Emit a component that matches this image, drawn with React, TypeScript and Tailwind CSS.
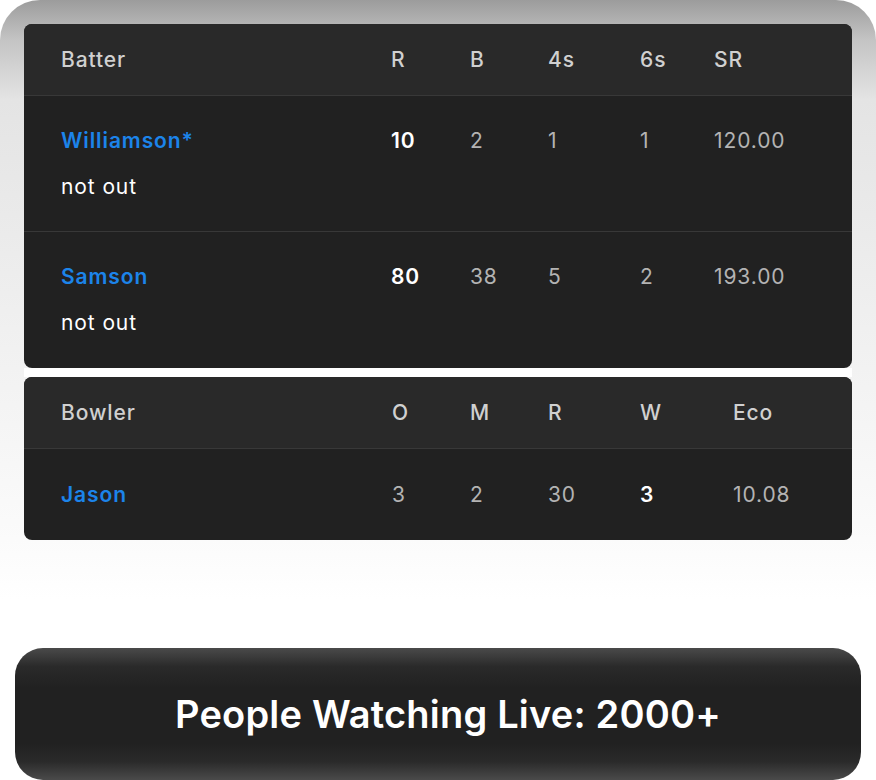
import React from "react";

const font = { fontFamily: "Inter, 'Noto Sans', sans-serif" };

type Batter = { name: string; r: string; b: string; f: string; s: string; sr: string };

const batters: Batter[] = [
  { name: "Williamson*", r: "10", b: "2", f: "1", s: "1", sr: "120.00" },
  { name: "Samson", r: "80", b: "38", f: "5", s: "2", sr: "193.00" },
];

export default function App() {
  return (
    <div
      className="w-[876px] h-[780px] bg-white flex flex-col font-[Inter,'Noto_Sans',sans-serif]"
      style={font}
    >
      <div className="rounded-t-[40px] bg-[linear-gradient(180deg,#9c9c9c_0px,#c4c4c4_40px,#e4e4e4_100px,#fbfbfb_540px,#ffffff_600px)] px-6 pt-6 pb-[108px]">
        {/* Batter card */}
        <div className="rounded-lg overflow-hidden bg-[#212121]">
          <div className="h-[72px] bg-[#292929] border-b border-[#383838] grid grid-cols-[330px_79px_78px_92px_74px_1fr] items-center pl-[37px] text-[21px] tracking-[0.9px] font-medium text-[#d0d0d0]">
            <div>Batter</div>
            <div>R</div>
            <div>B</div>
            <div>4s</div>
            <div>6s</div>
            <div>SR</div>
          </div>
          {batters.map((b, i) => (
            <div
              key={b.name}
              className={
                i === 0
                  ? "h-[136px] border-b border-[#383838] pl-[37px] pt-[31px]"
                  : "h-[136px] pl-[37px] pt-[31px]"
              }
            >
              <div className="grid grid-cols-[330px_79px_78px_92px_74px_1fr] items-center text-[21px] tracking-[0.9px] leading-[28px]">
                <div className="text-[#1c84ea] font-semibold">{b.name}</div>
                <div className="text-white font-semibold">{b.r}</div>
                <div className="text-[#b3b3b3]">{b.b}</div>
                <div className="text-[#b3b3b3]">{b.f}</div>
                <div className="text-[#b3b3b3]">{b.s}</div>
                <div className="text-[#b3b3b3]">{b.sr}</div>
              </div>
              <div className="mt-[18px] text-[21px] tracking-[0.9px] leading-[28px] text-white">not out</div>
            </div>
          ))}
        </div>
        <div className="h-[9px] bg-white" />
        {/* Bowler card */}
        <div className="rounded-lg overflow-hidden bg-[#212121]">
          <div className="h-[72px] bg-[#292929] border-b border-[#383838] grid grid-cols-[331px_78px_78px_92px_93px_1fr] items-center pl-[37px] text-[21px] tracking-[0.9px] font-medium text-[#d0d0d0]">
            <div>Bowler</div>
            <div>O</div>
            <div>M</div>
            <div>R</div>
            <div>W</div>
            <div>Eco</div>
          </div>
          <div className="h-[91px] grid grid-cols-[331px_78px_78px_92px_93px_1fr] items-center pl-[37px] text-[21px] tracking-[0.9px]">
            <div className="text-[#1c84ea] font-semibold">Jason</div>
            <div className="text-[#b3b3b3]">3</div>
            <div className="text-[#b3b3b3]">2</div>
            <div className="text-[#b3b3b3]">30</div>
            <div className="text-white font-semibold">3</div>
            <div className="text-[#b3b3b3]">10.08</div>
          </div>
        </div>
      </div>
      <div className="mx-[15px] h-[132px] rounded-[28px] bg-[linear-gradient(180deg,#4a4a4a_0%,#2a2a2a_14%,#212121_30%,#212121_72%,#2a2a2a_86%,#4a4a4a_100%)] flex items-center justify-center pl-[20px]">
        <span className="text-white text-[38px] font-semibold tracking-[0.2px]">
          People Watching Live: 2000+
        </span>
      </div>
    </div>
  );
}
